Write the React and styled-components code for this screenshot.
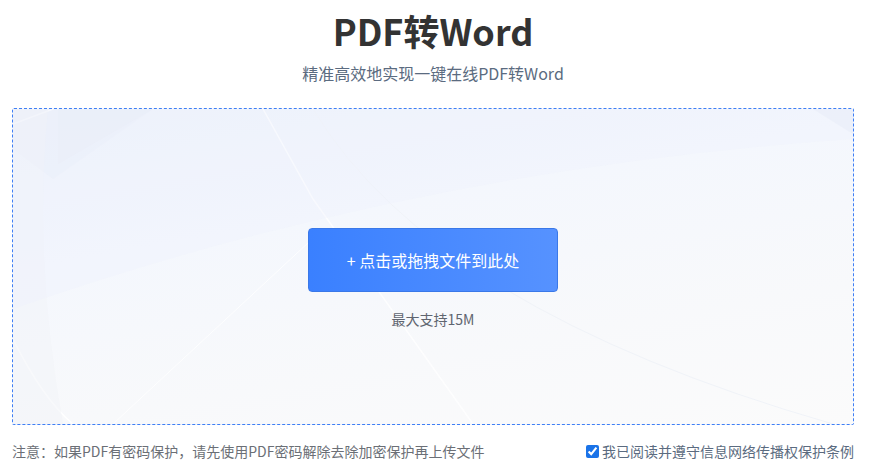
import React, { useState } from 'react';
import styled, { createGlobalStyle } from 'styled-components';

const GlobalStyle = createGlobalStyle`
  html, body {
    margin: 0;
    padding: 0;
    background: #fff;
    font-family: "Noto Sans CJK SC", "Noto Sans", sans-serif;
  }
`;

const Page = styled.div`
  width: 842px;
  padding: 0 17px 0 12px;
  display: flex;
  flex-direction: column;
  align-items: center;
`;

const Title = styled.h1`
  margin: 7px 0 0;
  font-size: 36px;
  line-height: 46px;
  font-weight: 700;
  color: #333;
`;

const Subtitle = styled.p`
  margin: 8px 0 0;
  font-size: 16px;
  line-height: 24px;
  color: #5b6b80;
`;

const DropZone = styled.div`
  position: relative;
  margin-top: 23px;
  width: 100%;
  height: 317px;
  box-sizing: border-box;
  padding-top: 24px;
  border: 1px dashed #3f7ff5;
  border-radius: 2px;
  overflow: hidden;
  background: linear-gradient(170deg, #edf2fb 0%, #f4f7fd 35%, #f8f9fb 70%, #fbfbfb 100%);
  display: flex;
  flex-direction: column;
  align-items: center;
  justify-content: center;
`;

const Decor = styled.svg`
  position: absolute;
  inset: 0;
  width: 100%;
  height: 100%;
  pointer-events: none;
`;

const UploadButton = styled.button`
  position: relative;
  width: 250px;
  height: 64px;
  border: 1px solid #3a78e8;
  border-radius: 4px;
  background: linear-gradient(90deg, #3a80ff 0%, #5692ff 100%);
  color: #fff;
  font-family: inherit;
  font-size: 16px;
  cursor: pointer;
`;

const Limit = styled.div`
  position: relative;
  margin-top: 16px;
  font-size: 14px;
  line-height: 22px;
  color: #5f6570;
`;

const Footer = styled.div`
  width: 100%;
  display: flex;
  justify-content: space-between;
  align-items: center;
  margin-top: 16px;
  font-size: 14px;
  line-height: 20px;
  color: #6b6f76;
`;

const Agree = styled.label`
  display: flex;
  align-items: center;
  gap: 3px;
  color: #5b6b80;
  cursor: pointer;

  input {
    margin: 0;
    width: 13px;
    height: 13px;
    accent-color: #1a73e8;
  }
`;

export default function App() {
  const [agreed, setAgreed] = useState(true);
  return (
    <>
      <GlobalStyle />
      <Page>
        <Title>PDF转Word</Title>
        <Subtitle>精准高效地实现一键在线PDF转Word</Subtitle>
        <DropZone>
          <Decor viewBox="0 0 840 315" preserveAspectRatio="none">
            <path d="M0 0 L140 0 L40 70 L0 40 Z" fill="#e9eef8" opacity="0.6" />
            <path d="M45 0 L140 0 L45 55 Z" fill="#e7ecf6" opacity="0.5" />
            <path d="M0 15 L40 0" stroke="#fff" strokeWidth="1.5" opacity="0.8" />
            <path d="M250 0 L300 90 L460 315" stroke="#fff" strokeWidth="1.5" opacity="0.8" fill="none" />
            <path d="M300 0 Q420 200 820 315" stroke="#f0f3f8" strokeWidth="1" fill="none" />
            <path d="M0 230 Q30 290 60 315" stroke="#fff" strokeWidth="1.5" fill="none" />
            <path d="M100 315 L310 120" stroke="#fff" strokeWidth="1" fill="none" opacity="0.8" />
            <path d="M35 0 Q20 150 50 315 L0 315 L0 0 Z" fill="#f2f4f8" opacity="0.5" />
            <path d="M800 0 L840 0 L840 25 Z" fill="#e8edf8" opacity="0.8" />
            <path d="M0 200 Q400 60 840 30 L840 0 L0 0 Z" fill="#eef2fb" opacity="0.35" />
          </Decor>
          <UploadButton type="button">+ 点击或拖拽文件到此处</UploadButton>
          <Limit>最大支持15M</Limit>
        </DropZone>
        <Footer>
          <span>注意：如果PDF有密码保护，请先使用PDF密码解除去除加密保护再上传文件</span>
          <Agree>
            <input type="checkbox" checked={agreed} onChange={(e) => setAgreed(e.target.checked)} />
            我已阅读并遵守信息网络传播权保护条例
          </Agree>
        </Footer>
      </Page>
    </>
  );
}
